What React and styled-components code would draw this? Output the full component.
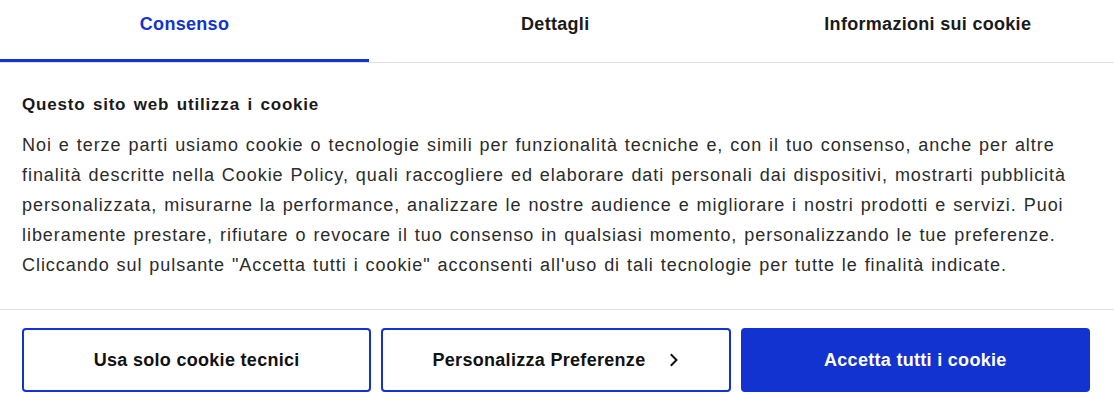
import React, { useState } from 'react';
import styled, { createGlobalStyle } from 'styled-components';

const GlobalStyle = createGlobalStyle`
  html, body {
    margin: 0;
    padding: 0;
    background: #fff;
  }
  body {
    font-family: "Liberation Sans", Arial, sans-serif;
    color: #222;
  }
`;

const BLUE = '#1233cf';

const Banner = styled.div`
  width: 1114px;
  background: #fff;
`;

const Tabs = styled.div`
  display: grid;
  grid-template-columns: 369px 1fr 1fr;
  border-bottom: 1px solid #e0e0e0;
`;

const Tab = styled.button`
  height: 62px;
  padding: 0 0 14px;
  border: none;
  background: none;
  font-family: inherit;
  font-size: 18px;
  font-weight: 700;
  letter-spacing: 0.3px;
  color: ${props => props.active ? BLUE : '#1a1a1a'};
  box-shadow: ${props => props.active ? `inset 0 -3px 0 ${BLUE}` : 'none'};
  cursor: pointer;
`;

const Body = styled.div`
  padding: 29px 22px 29px;
  border-bottom: 1px solid #e0e0e0;
`;

const Title = styled.h2`
  margin: 0 0 12px;
  font-size: 17px;
  font-weight: 700;
  line-height: 26px;
  letter-spacing: 0.8px;
  word-spacing: 2px;
  color: #1a1a1a;
`;

const Text = styled.p`
  margin: 0;
  font-size: 18px;
  line-height: 30px;
  letter-spacing: 0.95px;
  word-spacing: 1px;
  color: #2b2b2b;
`;

const Actions = styled.div`
  display: grid;
  grid-template-columns: repeat(3, 1fr);
  gap: 10px;
  padding: 18px 24px 17px 22px;
`;

const Button = styled.button`
  height: 64px;
  display: flex;
  align-items: center;
  justify-content: center;
  gap: 24px;
  border: 2px solid ${BLUE};
  border-radius: 4px;
  background: ${props => props.primary ? BLUE : '#fff'};
  color: ${props => props.primary ? '#fff' : '#111'};
  font-family: inherit;
  font-size: 18px;
  font-weight: 700;
  letter-spacing: 0.3px;
  cursor: pointer;
`;

const Chevron = () => (
  <svg width="10" height="14" viewBox="0 0 10 14" fill="none">
    <path d="M2.5 2l5 5-5 5" stroke="#111" strokeWidth="2" strokeLinecap="square" />
  </svg>
);

export default function App() {
  const [tab, setTab] = useState(0);
  const tabs = ['Consenso', 'Dettagli', 'Informazioni sui cookie'];

  return (
    <Banner>
      <GlobalStyle />
      <Tabs>
        {tabs.map((t, i) => (
          <Tab key={t} active={i === tab} onClick={() => setTab(i)}>{t}</Tab>
        ))}
      </Tabs>
      <Body>
        <Title>Questo sito web utilizza i cookie</Title>
        <Text>
          Noi e terze parti usiamo cookie o tecnologie simili per funzionalità tecniche e, con il tuo consenso, anche per altre
          finalità descritte nella Cookie Policy, quali raccogliere ed elaborare dati personali dai dispositivi, mostrarti pubblicità
          personalizzata, misurarne la performance, analizzare le nostre audience e migliorare i nostri prodotti e servizi. Puoi
          liberamente prestare, rifiutare o revocare il tuo consenso in qualsiasi momento, personalizzando le tue preferenze.
          Cliccando sul pulsante "Accetta tutti i cookie" acconsenti all'uso di tali tecnologie per tutte le finalità indicate.
        </Text>
      </Body>
      <Actions>
        <Button>Usa solo cookie tecnici</Button>
        <Button>Personalizza Preferenze <Chevron /></Button>
        <Button primary>Accetta tutti i cookie</Button>
      </Actions>
    </Banner>
  );
}
